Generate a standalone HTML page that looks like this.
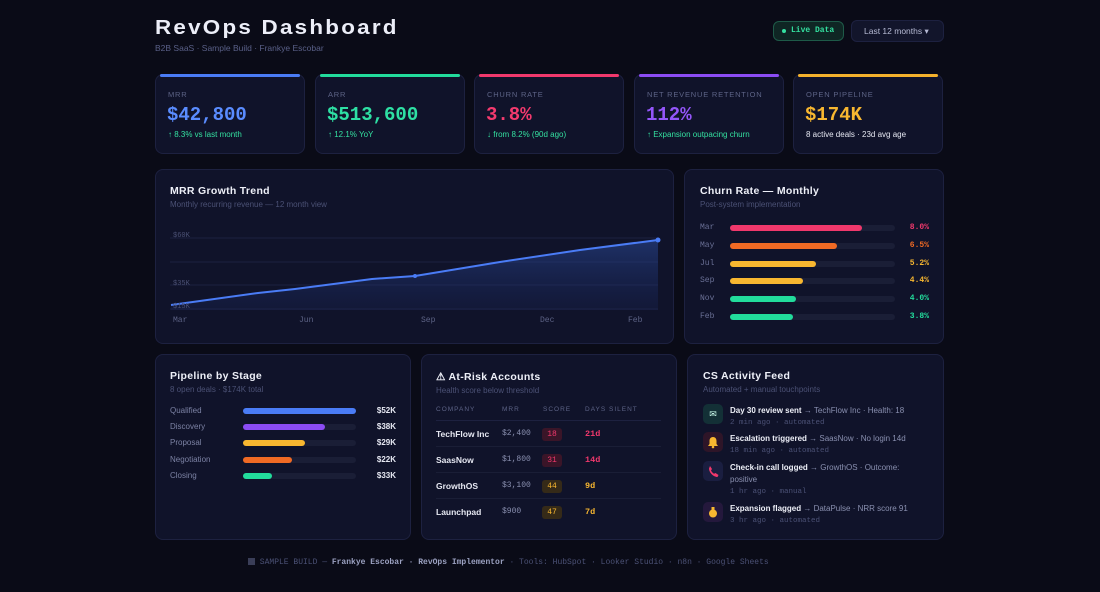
<!DOCTYPE html>
<html><head><meta charset="utf-8"><style>
*{margin:0;padding:0;box-sizing:border-box}
body{width:1100px;height:592px;background:#0a0b17;font-family:"Liberation Sans",sans-serif;color:#e6e8f2;position:relative;overflow:hidden}
.a{position:absolute;white-space:nowrap}
.card{position:absolute;background:#10132a;border:1px solid #1d2140;border-radius:8px}
.mono{font-family:"Liberation Mono",monospace}
.kl{position:absolute;left:12px;top:15px;font-size:7.5px;letter-spacing:.8px;color:#5d6386}
.kv{position:absolute;left:11px;top:29px;font-size:19px;font-weight:bold;font-family:"Liberation Mono",monospace}
.ks{position:absolute;left:12px;top:55px;font-size:8px}
.top{position:absolute;left:4px;right:4px;top:-1px;height:3px;border-radius:2px}
.t{position:absolute;font-weight:bold;font-size:10.5px;color:#eef0f8;letter-spacing:.3px}
.st{position:absolute;font-size:8px;color:#4b5175}
.lbl{position:absolute;font-size:8px;color:#7c82a4;line-height:10px}
.trk{position:absolute;height:6px;border-radius:3px;background:#1a1e36}
.bar{position:absolute;left:0;top:0;height:6px;border-radius:3px}
.cl{position:absolute;left:700px;font-size:8px;color:#6a7096;line-height:10px;font-family:"Liberation Mono",monospace}
.cv{position:absolute;left:880px;width:49px;text-align:right;font-size:8px;font-weight:bold;line-height:10px;font-family:"Liberation Mono",monospace}
.pv{position:absolute;left:356px;width:40px;text-align:right;font-size:8px;font-weight:bold;line-height:10px}
.rc{position:absolute;left:436px;font-size:8.5px;font-weight:bold;line-height:10px}
.rm{position:absolute;left:502px;font-size:8px;color:#8a90b0;line-height:10px;font-family:"Liberation Mono",monospace}
.rb{position:absolute;left:542px;width:20px;height:13px;border-radius:3px;font-size:8px;text-align:center;line-height:13px;font-family:"Liberation Mono",monospace}
.rd{position:absolute;left:585px;font-size:8.5px;font-weight:bold;line-height:10px;font-family:"Liberation Mono",monospace}
</style></head><body>
<div class="a" style="left:155px;top:17px;font-size:20px;font-weight:bold;letter-spacing:2px;color:#eceef8;transform:scaleX(1.12);transform-origin:left">RevOps Dashboard</div>
<div class="a" style="left:155px;top:43px;font-size:8.5px;color:#5a6088">B2B SaaS · Sample Build · Frankye Escobar</div>
<div class="a mono" style="left:773px;top:21px;width:71px;height:20px;border:1px solid #1e5a48;background:#0f2624;border-radius:6px;font-size:8px;color:#34e0a0;font-weight:bold;line-height:18px;padding-left:17px">Live Data<span class="a" style="left:8px;top:7px;width:4px;height:4px;border-radius:2px;background:#34e0a0"></span></div>
<div class="a" style="left:851px;top:20px;width:93px;height:22px;border:1px solid #1d2140;background:#12152b;border-radius:6px;font-size:8.5px;color:#b6bad4;line-height:20px;padding-left:12px">Last 12 months ▾</div>

<div class="card" style="left:155px;top:74px;width:150px;height:80px"><div class="top" style="background:#4a7cf6"></div><div class="kl">MRR</div><div class="kv" style="color:#5a8cff">$42,800</div><div class="ks" style="color:#34e0a0">↑ 8.3% vs last month</div></div>
<div class="card" style="left:315px;top:74px;width:150px;height:80px"><div class="top" style="background:#22dc9c"></div><div class="kl">ARR</div><div class="kv" style="color:#2ee0a4">$513,600</div><div class="ks" style="color:#34e0a0">↑ 12.1% YoY</div></div>
<div class="card" style="left:474px;top:74px;width:150px;height:80px"><div class="top" style="background:#f0386c"></div><div class="kl">CHURN RATE</div><div class="kv" style="color:#f43a6e">3.8%</div><div class="ks" style="color:#34e0a0">↓ from 8.2% (90d ago)</div></div>
<div class="card" style="left:634px;top:74px;width:150px;height:80px"><div class="top" style="background:#8b4cf4"></div><div class="kl">NET REVENUE RETENTION</div><div class="kv" style="color:#9456fa">112%</div><div class="ks" style="color:#34e0a0">↑ Expansion outpacing churn</div></div>
<div class="card" style="left:793px;top:74px;width:150px;height:80px"><div class="top" style="background:#f4b12c"></div><div class="kl">OPEN PIPELINE</div><div class="kv" style="color:#f8b730">$174K</div><div class="ks" style="color:#e6e8f2">8 active deals · 23d avg age</div></div>

<div class="card" style="left:155px;top:169px;width:519px;height:175px">
<div class="t" style="left:14px;top:15px">MRR Growth Trend</div>
<div class="st" style="left:14px;top:30px">Monthly recurring revenue — 12 month view</div>
</div>
<svg class="a" style="left:0;top:0" width="1100" height="592">
<defs><linearGradient id="g" x1="0" y1="0" x2="0" y2="1"><stop offset="0" stop-color="#2a4a9a" stop-opacity=".55"/><stop offset="1" stop-color="#1a2860" stop-opacity=".25"/></linearGradient></defs>
<g stroke="#1d2140" stroke-width="1"><line x1="170" y1="238" x2="658" y2="238"/><line x1="170" y1="262" x2="658" y2="262"/><line x1="170" y1="285" x2="658" y2="285"/><line x1="170" y1="309" x2="658" y2="309"/></g>
<path d="M171 305 L258 293 L295 289 L372 279 L415 276 L500 262 L580 250 L658 240 L658 310 L171 310Z" fill="url(#g)"/>
<path d="M171 305 L258 293 L295 289 L372 279 L415 276 L500 262 L580 250 L658 240" fill="none" stroke="#4a7cf6" stroke-width="2"/>
<circle cx="415" cy="276" r="2" fill="#4a7cf6"/><circle cx="658" cy="240" r="2.5" fill="#4a7cf6"/>
<g font-family="Liberation Mono" font-size="7" fill="#4b5175"><text x="173" y="237">$60K</text><text x="173" y="285">$35K</text><text x="173" y="308">$15K</text></g>
<g font-family="Liberation Mono" font-size="8" fill="#5d6386"><text x="173" y="322">Mar</text><text x="299" y="322">Jun</text><text x="421" y="322">Sep</text><text x="540" y="322">Dec</text><text x="628" y="322">Feb</text></g>
</svg>

<div class="card" style="left:684px;top:169px;width:260px;height:175px">
<div class="t" style="left:15px;top:15px">Churn Rate — Monthly</div>
<div class="st" style="left:15px;top:30px">Post-system implementation</div>
</div>
<div class="cl" style="top:223px">Mar</div><div class="cl" style="top:241px">May</div><div class="cl" style="top:259px">Jul</div><div class="cl" style="top:276px">Sep</div><div class="cl" style="top:294px">Nov</div><div class="cl" style="top:312px">Feb</div>
<div class="trk" style="left:730px;top:225px;width:165px"><div class="bar" style="width:132px;background:#f0386c"></div></div>
<div class="trk" style="left:730px;top:243px;width:165px"><div class="bar" style="width:107px;background:#f06a24"></div></div>
<div class="trk" style="left:730px;top:261px;width:165px"><div class="bar" style="width:86px;background:#f8b730"></div></div>
<div class="trk" style="left:730px;top:278px;width:165px"><div class="bar" style="width:73px;background:#f8b730"></div></div>
<div class="trk" style="left:730px;top:296px;width:165px"><div class="bar" style="width:66px;background:#22dc9c"></div></div>
<div class="trk" style="left:730px;top:314px;width:165px"><div class="bar" style="width:63px;background:#22dc9c"></div></div>
<div class="cv" style="top:223px;color:#f0386c">8.0%</div><div class="cv" style="top:241px;color:#f06a24">6.5%</div><div class="cv" style="top:259px;color:#f8b730">5.2%</div><div class="cv" style="top:276px;color:#f8b730">4.4%</div><div class="cv" style="top:294px;color:#22dc9c">4.0%</div><div class="cv" style="top:312px;color:#22dc9c">3.8%</div>

<div class="card" style="left:155px;top:354px;width:256px;height:186px">
<div class="t" style="left:14px;top:15px">Pipeline by Stage</div>
<div class="st" style="left:14px;top:30px">8 open deals · $174K total</div>
</div>
<div class="lbl" style="left:170px;top:406px">Qualified</div><div class="lbl" style="left:170px;top:422px">Discovery</div><div class="lbl" style="left:170px;top:438px">Proposal</div><div class="lbl" style="left:170px;top:455px">Negotiation</div><div class="lbl" style="left:170px;top:471px">Closing</div>
<div class="trk" style="left:243px;top:408px;width:113px"><div class="bar" style="width:113px;background:#4a7cf6"></div></div>
<div class="trk" style="left:243px;top:424px;width:113px"><div class="bar" style="width:82px;background:#8b4cf4"></div></div>
<div class="trk" style="left:243px;top:440px;width:113px"><div class="bar" style="width:62px;background:#f8b730"></div></div>
<div class="trk" style="left:243px;top:457px;width:113px"><div class="bar" style="width:49px;background:#f06a24"></div></div>
<div class="trk" style="left:243px;top:473px;width:113px"><div class="bar" style="width:29px;background:#22dc9c"></div></div>
<div class="pv" style="top:406px">$52K</div><div class="pv" style="top:422px">$38K</div><div class="pv" style="top:438px">$29K</div><div class="pv" style="top:455px">$22K</div><div class="pv" style="top:471px">$33K</div>

<div class="card" style="left:421px;top:354px;width:256px;height:186px">
<div class="t" style="left:14px;top:16px">⚠ At-Risk Accounts</div>
<div class="st" style="left:14px;top:31px">Health score below threshold</div>
</div>
<div class="a" style="left:436px;top:406px;font-size:6.5px;letter-spacing:1px;color:#5d6386">COMPANY</div>
<div class="a" style="left:502px;top:406px;font-size:6.5px;letter-spacing:1px;color:#5d6386">MRR</div>
<div class="a" style="left:543px;top:406px;font-size:6.5px;letter-spacing:1px;color:#5d6386">SCORE</div>
<div class="a" style="left:585px;top:406px;font-size:6.5px;letter-spacing:1px;color:#5d6386">DAYS SILENT</div>
<div class="a" style="left:436px;top:420px;width:225px;height:1px;background:#1d2140"></div>
<div class="a" style="left:436px;top:446px;width:225px;height:1px;background:#1a1e36"></div>
<div class="a" style="left:436px;top:472px;width:225px;height:1px;background:#1a1e36"></div>
<div class="a" style="left:436px;top:498px;width:225px;height:1px;background:#1a1e36"></div>
<div class="rc" style="top:429px">TechFlow Inc</div><div class="rc" style="top:455px">SaasNow</div><div class="rc" style="top:481px">GrowthOS</div><div class="rc" style="top:507px">Launchpad</div>
<div class="rm" style="top:429px">$2,400</div><div class="rm" style="top:455px">$1,800</div><div class="rm" style="top:481px">$3,100</div><div class="rm" style="top:507px">$900</div>
<div class="rb" style="top:428px;background:#3a1528;color:#f0386c">18</div>
<div class="rb" style="top:454px;background:#3a1528;color:#f0386c">31</div>
<div class="rb" style="top:480px;background:#352a18;color:#f8b730">44</div>
<div class="rb" style="top:506px;background:#352a18;color:#f8b730">47</div>
<div class="rd" style="top:429px;color:#f0386c">21d</div><div class="rd" style="top:455px;color:#f0386c">14d</div><div class="rd" style="top:481px;color:#f8b730">9d</div><div class="rd" style="top:507px;color:#f8b730">7d</div>

<div class="card" style="left:687px;top:354px;width:257px;height:186px">
<div class="t" style="left:15px;top:15px">CS Activity Feed</div>
<div class="st" style="left:15px;top:30px">Automated + manual touchpoints</div>
</div>
<div class="a" style="left:703px;top:404px;width:20px;height:20px;border-radius:5px;background:#133036;color:#cfe;font-size:9px;text-align:center;line-height:20px">✉</div>
<div class="a" style="left:703px;top:432px;width:20px;height:20px;border-radius:5px;background:#2e1528"><svg width="20" height="20"><path d="M10 5c-2.5 0-3.5 2-3.5 4v3l-1.5 2h10l-1.5-2V9c0-2-1-4-3.5-4z" fill="#f8b730"/><circle cx="10" cy="15" r="1.3" fill="#f8b730"/></svg></div>
<div class="a" style="left:703px;top:461px;width:20px;height:20px;border-radius:5px;background:#1a1e40"><svg width="20" height="20"><path d="M7 5l2 3-1 1.5c.7 1.5 1.8 2.6 3 3.2L12.5 12l3 2-1 2c-4 0-8.5-4.5-8.5-8.5z" fill="#f0386c"/></svg></div>
<div class="a" style="left:703px;top:502px;width:20px;height:20px;border-radius:5px;background:#24183c"><svg width="20" height="20"><circle cx="10" cy="11.5" r="4" fill="#f8b730"/><rect x="8.5" y="5" width="3" height="3" fill="#f8b730"/></svg></div>
<div class="a" style="left:730px;top:405px;font-size:8px;color:#8a90b0;line-height:11px"><b style="color:#eef0f8">Day 30 review sent</b> → TechFlow Inc · Health: 18<br><span class="mono" style="font-size:7.5px;color:#4b5175">2 min ago · automated</span></div>
<div class="a" style="left:730px;top:433px;font-size:8px;color:#8a90b0;line-height:11px"><b style="color:#eef0f8">Escalation triggered</b> → SaasNow · No login 14d<br><span class="mono" style="font-size:7.5px;color:#4b5175">18 min ago · automated</span></div>
<div class="a" style="left:730px;top:462px;width:180px;white-space:normal;font-size:8px;color:#8a90b0;line-height:11.5px"><b style="color:#eef0f8">Check-in call logged</b> → GrowthOS · Outcome: positive<br><span class="mono" style="font-size:7.5px;color:#4b5175">1 hr ago · manual</span></div>
<div class="a" style="left:730px;top:503px;font-size:8px;color:#8a90b0;line-height:11px"><b style="color:#eef0f8">Expansion flagged</b> → DataPulse · NRR score 91<br><span class="mono" style="font-size:7.5px;color:#4b5175">3 hr ago · automated</span></div>

<div class="a mono" style="left:248px;top:558px;font-size:8px;color:#4b5175"><span style="display:inline-block;width:7px;height:7px;background:#3a3e58;vertical-align:-1px"></span> SAMPLE BUILD — <b style="color:#9ca2c2">Frankye Escobar · RevOps Implementor</b> · Tools: HubSpot · Looker Studio · n8n · Google Sheets</div>
</body></html>
